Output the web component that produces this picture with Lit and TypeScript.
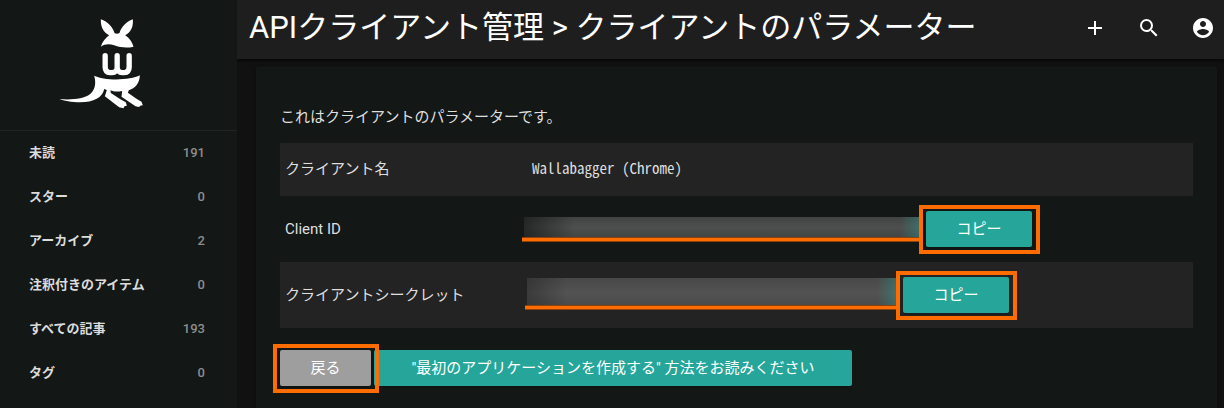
import { LitElement, html, css, svg } from "lit";
import { customElement, property } from "lit/decorators.js";

const logo = svg`
  <path d="M182 56C203 64 217 78 223 97Q231 101 238 97C244 78 258 64 278 56C280 78 273 94 255 104C268 112 276 124 280 138C262 143 240 141 222 134C208 129 195 129 182 138C186 124 196 112 207 104C189 94 181 78 182 56Z"/>
  <path d="M195 165V200C195 210 200 216 209 216H216C225 216 231 210 231 200V165M231 200C231 210 237 216 246 216H253C262 216 267 210 267 200V165" fill="none" stroke="#fff" stroke-width="16" stroke-linecap="round"/>
  <path d="M162 225C190 240 270 240 299 224C299 247 285 263 266 269L263 276L290 295L304 303L308 314L300 315L297 319L286 317L244 288L246 271C232 274 220 273 211 269L212 277L243 297L257 305L260 315L253 317L250 323L237 320L194 287L200 268L192 265C188 290 160 305 120 305C95 305 70 300 57 295C90 298 130 296 150 280C166 266 168 245 162 225Z"/>`;

@customElement("side-nav")
class SideNav extends LitElement {
  @property({ attribute: false }) items: [string, number][] = [];

  static styles = css`
    :host { display: block; background: #131716; min-height: 100vh; }
    .brand { display: flex; justify-content: center; padding: 19px 35px 21px 0; border-bottom: 1px solid #202424; }
    .brand svg { width: 85px; height: 90px; display: block; fill: #fff; }
    .list { list-style: none; margin: 0; padding: 0; }
    .link { display: flex; justify-content: space-between; align-items: center; height: 44px; padding: 0 32px 2px 29px;
      box-sizing: border-box; font-size: 13px; font-weight: 700; color: #dcdcdc; text-decoration: none; }
    .count { color: #8c8e8d; font-weight: 500; }
  `;

  render() {
    return html`
      <a class="brand" href="#" aria-label="wallabag"><svg viewBox="57 55 254 270">${logo}</svg></a>
      <ul class="list">
        ${this.items.map(([label, count]) => html`
          <li><a class="link" href="#"><span>${label}</span><span class="count">${count}</span></a></li>`)}
      </ul>`;
  }
}

@customElement("app-root")
class AppRoot extends LitElement {
  static styles = css`
    :host { display: grid; grid-template-columns: 237px minmax(0, 1fr); min-height: 100vh; background: #111;
      font-family: Roboto, "Noto Sans CJK JP", sans-serif; font-size: 15px; line-height: 23px; color: #dfdfdf; }
    * { box-sizing: border-box; }
    .page { height: 100vh; overflow: hidden; }
    .bar { display: flex; align-items: center; justify-content: space-between; height: 59px; padding: 0 9px 4px 12px;
      background: #1e1e1e; box-shadow: 0 2px 3px #0009; color: #fff; }
    .title { margin: 0; font-size: 31px; line-height: 44px; font-weight: 400; white-space: nowrap; }
    .tools { display: flex; gap: 30px; }
    .tool { display: block; width: 24px; height: 24px; padding: 0; border: 0; background: none; }
    .tool svg { display: block; width: 24px; height: 24px; fill: #fff; }
    .card { margin: 8px 7px 0 19px; padding: 24px; min-height: 100vh; border-radius: 2px; background: #131716;
      box-shadow: 0 2px 4px #0006; }
    .intro { margin: 15px 0 14px; }
    .params { width: 100%; border-collapse: collapse; table-layout: fixed; }
    .params tr:nth-child(odd) { background: #232323; }
    .params th, .params td { padding: 15px 5px; font-weight: 400; text-align: left; }
    .params th { width: 239px; }
    .name { display: block; height: 23px; line-height: 19px; padding-left: 8px; font-family: "Noto Sans CJK JP", monospace; font-feature-settings: "hwid"; }
    .value { display: flex; align-items: flex-start; gap: 4px; }
    .secret { position: relative; height: 20px; width: 398px; margin-top: 6px;
      background: linear-gradient(90deg, #131716b0, #13171600 50px calc(100% - 22px), #26a69a66), linear-gradient(#414342, #4d4f4e 50%, #444645); }
    .secret.tall { height: 27px; width: 372px; margin: 1px 0 0 3px;
      background: linear-gradient(90deg, #23232380, #23232300 40px calc(100% - 22px), #26a69a66), linear-gradient(#484848, #535353 55%, #4a4a4a); }
    .secret::after { content: ""; position: absolute; left: -2px; right: 0; top: 100%; height: 5px;
      background: #ff6d00; border: solid #8c430b; border-width: 1px 0; box-sizing: border-box; }
    .mark { position: relative; display: flex; }
    .mark::after { content: ""; position: absolute; inset: -6px -8px -7px -7px; border: 4px solid #ff6d00; pointer-events: none; z-index: 1; }
    .btn { height: 36px; padding: 0 30px; border: 0; border-radius: 2px; background: #26a69a; color: #fff;
      font: inherit; line-height: 36px; text-align: center; text-decoration: none; white-space: nowrap;
      box-shadow: 0 2px 2px #0003; min-width: 106px; }
    .btn.grey { background: #9e9e9e; min-width: 91px; }
    .btn.wide { min-width: 478px; }
    .actions { display: flex; gap: 3px; margin-top: 22px; }
  `;

  items: [string, number][] = [
    ["未読", 191], ["スター", 0], ["アーカイブ", 2], ["注釈付きのアイテム", 0], ["すべての記事", 193], ["タグ", 0],
  ];

  tool(label: string, d: string) {
    return html`<button class="tool" aria-label=${label}><svg viewBox="0 0 24 24"><path d=${d}></path></svg></button>`;
  }

  secretRow(label: string, tall: string) {
    return html`<tr><th scope="row">${label}</th><td><div class="value">
      <span class="secret ${tall}"></span>
      <span class="mark"><button class="btn">コピー</button></span>
    </div></td></tr>`;
  }

  render() {
    return html`
      <side-nav .items=${this.items}></side-nav>
      <div class="page">
        <header class="bar">
          <h1 class="title">APIクライアント管理 &gt; クライアントのパラメーター</h1>
          <div class="tools">
            ${this.tool("追加", "M19 13h-6v6h-2v-6H5v-2h6V5h2v6h6v2z")}
            ${this.tool("検索", "M15.5 14h-.79l-.28-.27A6.471 6.471 0 0 0 16 9.5 6.5 6.5 0 1 0 9.5 16c1.61 0 3.09-.59 4.23-1.57l.27.28v.79l5 4.99L20.49 19l-4.99-5zm-6 0C7.01 14 5 11.99 5 9.5S7.01 5 9.5 5 14 7.01 14 9.5 11.99 14 9.5 14z")}
            ${this.tool("アカウント", "M12 2C6.48 2 2 6.48 2 12s4.48 10 10 10 10-4.48 10-10S17.52 2 12 2zm0 3c1.66 0 3 1.34 3 3s-1.34 3-3 3-3-1.34-3-3 1.34-3 3-3zm0 14.2c-2.5 0-4.71-1.28-6-3.22.03-1.99 4-3.08 6-3.08 1.99 0 5.97 1.09 6 3.08-1.29 1.94-3.5 3.22-6 3.22z")}
          </div>
        </header>
        <main class="card">
          <p class="intro">これはクライアントのパラメーターです。</p>
          <table class="params">
            <tbody>
              <tr><th scope="row">クライアント名</th><td><span class="name">Wallabagger (Chrome)</span></td></tr>
              ${this.secretRow("Client ID", "")}
              ${this.secretRow("クライアントシークレット", "tall")}
            </tbody>
          </table>
          <div class="actions">
            <span class="mark"><a class="btn grey" href="#">戻る</a></span>
            <a class="btn wide" href="#">"最初のアプリケーションを作成する" 方法をお読みください</a>
          </div>
        </main>
      </div>`;
  }
}
